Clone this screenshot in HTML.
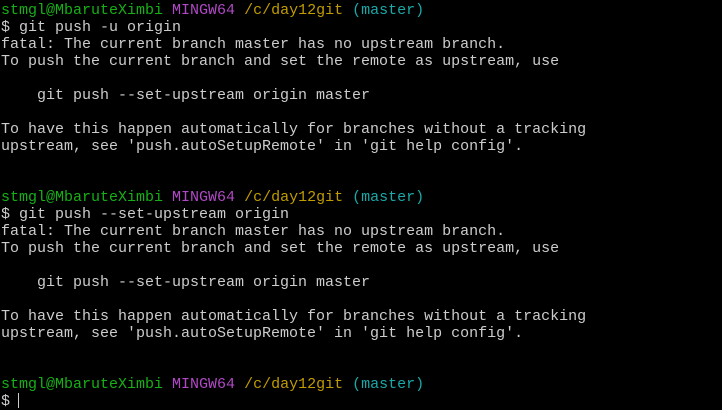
<!DOCTYPE html>
<html><head><meta charset="utf-8"><style>
html,body{margin:0;padding:0;background:#000;width:722px;height:410px;overflow:hidden}
pre{margin:0;padding:2px 0 0 1px;font-family:"Liberation Mono",monospace;font-size:15px;line-height:17px;color:#cccccc;white-space:pre}
.g{color:#16b016}.m{color:#b148c6}.y{color:#c19c00}.c{color:#1aa8a8}
.cur{display:inline-block;width:1px;height:15px;background:#ccc;vertical-align:-3px;margin-left:8px}
</style></head><body><pre><span class="g">stmgl@MbaruteXimbi</span> <span class="m">MINGW64</span> <span class="y">/c/day12git</span> <span class="c">(master)</span>
$ git push -u origin
fatal: The current branch master has no upstream branch.
To push the current branch and set the remote as upstream, use

    git push --set-upstream origin master

To have this happen automatically for branches without a tracking
upstream, see 'push.autoSetupRemote' in 'git help config'.


<span class="g">stmgl@MbaruteXimbi</span> <span class="m">MINGW64</span> <span class="y">/c/day12git</span> <span class="c">(master)</span>
$ git push --set-upstream origin
fatal: The current branch master has no upstream branch.
To push the current branch and set the remote as upstream, use

    git push --set-upstream origin master

To have this happen automatically for branches without a tracking
upstream, see 'push.autoSetupRemote' in 'git help config'.


<span class="g">stmgl@MbaruteXimbi</span> <span class="m">MINGW64</span> <span class="y">/c/day12git</span> <span class="c">(master)</span>
$<span class="cur"></span></pre></body></html>
